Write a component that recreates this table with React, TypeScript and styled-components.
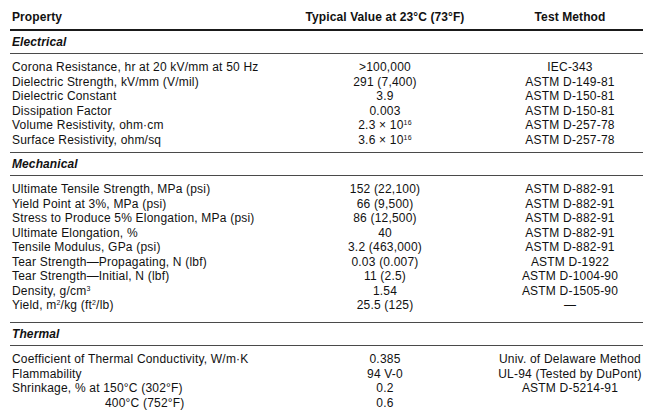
import type { ReactNode } from 'react'
import styled, { createGlobalStyle } from 'styled-components'

const GlobalStyle = createGlobalStyle`
  body {
    margin: 0;
    background: #fff;
    color: #111;
    font-family: 'Liberation Sans', Arial, sans-serif;
  }
`

const Sheet = styled.div`
  width: 633px;
  margin-left: 10px;
  font-size: 12px;
  letter-spacing: 0.2px;
`

const Grid = styled.div`
  display: grid;
  grid-template-columns: 288px 174px 1fr;
  align-items: center;
`

const HeadRow = styled(Grid)`
  padding: 10px 0 5px;
  line-height: 14px;
  font-weight: bold;
  letter-spacing: 0.1px;
  border-bottom: 2px solid #1a1a1a;
`

const DataRow = styled(Grid)`
  height: 14.5px;
  line-height: 14.5px;
  white-space: nowrap;
`

const NameCell = styled.div<{ $indent?: boolean }>`
  padding-left: ${(p) => (p.$indent ? 95 : 2)}px;
`

const ValueCell = styled.div`
  text-align: center;
`

const MethodCell = styled.div`
  padding-left: 25px;
  text-align: center;
`

const SectionTitle = styled.div<{ $first?: boolean }>`
  height: 22px;
  line-height: 22px;
  padding-left: 2px;
  font-weight: bold;
  font-style: italic;
  letter-spacing: 0.1px;
  border-top: ${(p) => (p.$first ? 'none' : '1px solid #4a4a4a')};
  border-bottom: 1px solid #4a4a4a;
`

const SectionBody = styled.div<{ $tail: number }>`
  padding-top: 6px;
  padding-bottom: ${(p) => p.$tail}px;
`

const Sup = styled.sup`
  font-size: 7px;
  line-height: 0;
  vertical-align: 4px;
`

type Row = { name: ReactNode; value: ReactNode; method: string; indent?: boolean }
type Section = { title: string; tail: number; rows: Row[] }

const sections: Section[] = [
  {
    title: 'Electrical',
    tail: 5,
    rows: [
      { name: 'Corona Resistance, hr at 20 kV/mm at 50 Hz', value: '>100,000', method: 'IEC-343' },
      { name: 'Dielectric Strength, kV/mm (V/mil)', value: '291 (7,400)', method: 'ASTM D-149-81' },
      { name: 'Dielectric Constant', value: '3.9', method: 'ASTM D-150-81' },
      { name: 'Dissipation Factor', value: '0.003', method: 'ASTM D-150-81' },
      {
        name: 'Volume Resistivity, ohm·cm',
        value: (
          <>
            2.3 × 10<Sup>16</Sup>
          </>
        ),
        method: 'ASTM D-257-78',
      },
      {
        name: 'Surface Resistivity, ohm/sq',
        value: (
          <>
            3.6 × 10<Sup>16</Sup>
          </>
        ),
        method: 'ASTM D-257-78',
      },
    ],
  },
  {
    title: 'Mechanical',
    tail: 9.5,
    rows: [
      { name: 'Ultimate Tensile Strength, MPa (psi)', value: '152 (22,100)', method: 'ASTM D-882-91' },
      { name: 'Yield Point at 3%, MPa (psi)', value: '66 (9,500)', method: 'ASTM D-882-91' },
      { name: 'Stress to Produce 5% Elongation, MPa (psi)', value: '86 (12,500)', method: 'ASTM D-882-91' },
      { name: 'Ultimate Elongation, %', value: '40', method: 'ASTM D-882-91' },
      { name: 'Tensile Modulus, GPa (psi)', value: '3.2 (463,000)', method: 'ASTM D-882-91' },
      { name: 'Tear Strength—Propagating, N (lbf)', value: '0.03 (0.007)', method: 'ASTM D-1922' },
      { name: 'Tear Strength—Initial, N (lbf)', value: '11 (2.5)', method: 'ASTM D-1004-90' },
      {
        name: (
          <>
            Density, g/cm<Sup>3</Sup>
          </>
        ),
        value: '1.54',
        method: 'ASTM D-1505-90',
      },
      {
        name: (
          <>
            Yield, m<Sup>2</Sup>/kg (ft<Sup>2</Sup>/lb)
          </>
        ),
        value: '25.5 (125)',
        method: '—',
      },
    ],
  },
  {
    title: 'Thermal',
    tail: 0,
    rows: [
      { name: 'Coefficient of Thermal Conductivity, W/m·K', value: '0.385', method: 'Univ. of Delaware Method' },
      { name: 'Flammability', value: '94 V-0', method: 'UL-94 (Tested by DuPont)' },
      { name: 'Shrinkage, % at 150°C (302°F)', value: '0.2', method: 'ASTM D-5214-91' },
      { name: '400°C (752°F)', value: '0.6', method: '', indent: true },
    ],
  },
]

export default function App() {
  return (
    <>
      <GlobalStyle />
      <Sheet>
        <HeadRow>
          <NameCell>Property</NameCell>
          <ValueCell>Typical Value at 23°C (73°F)</ValueCell>
          <MethodCell>Test Method</MethodCell>
        </HeadRow>
        {sections.map((s, i) => (
          <div key={s.title}>
            <SectionTitle $first={i === 0}>{s.title}</SectionTitle>
            <SectionBody $tail={s.tail}>
              {s.rows.map((r, j) => (
                <DataRow key={j}>
                  <NameCell $indent={r.indent}>{r.name}</NameCell>
                  <ValueCell>{r.value}</ValueCell>
                  <MethodCell>{r.method}</MethodCell>
                </DataRow>
              ))}
            </SectionBody>
          </div>
        ))}
      </Sheet>
    </>
  )
}
